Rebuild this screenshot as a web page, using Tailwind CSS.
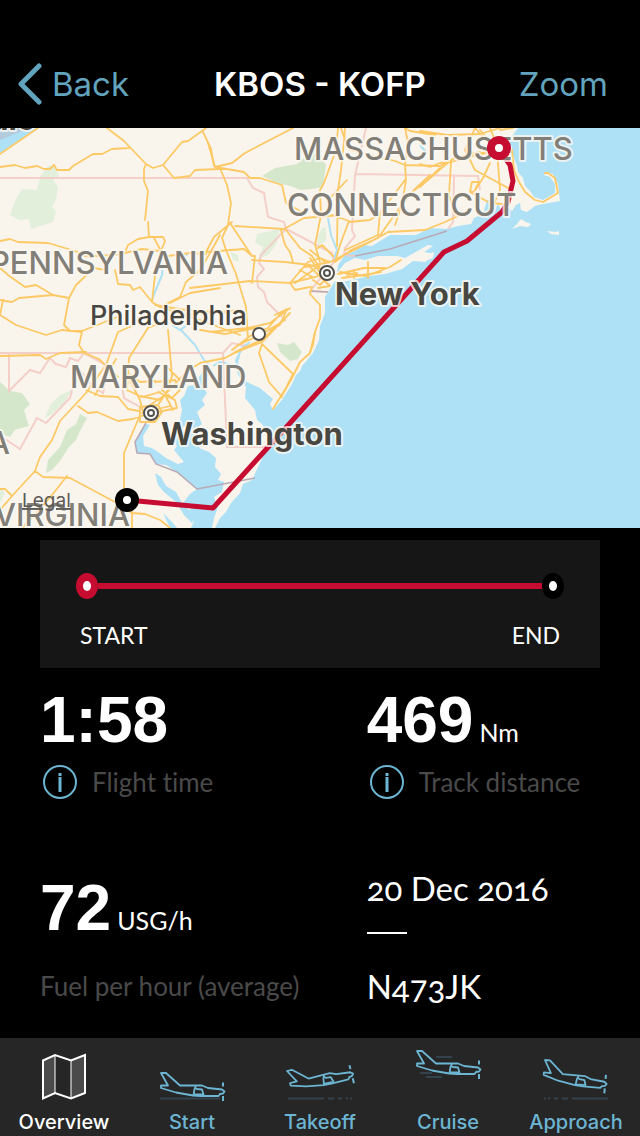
<!DOCTYPE html>
<html lang="en">
<head>
  <meta charset="UTF-8" />
  <meta name="viewport" content="width=device-width, initial-scale=1" />
  <title>KBOS - KOFP</title>
  <script src="https://cdn.jsdelivr.net/npm/@tailwindcss/browser@4"></script>
</head>
<body class="bg-black text-white font-['Lato',sans-serif]">
  <div class="min-h-screen flex flex-col">
    <header class="grid grid-cols-[1fr_auto_1fr] items-center h-32 pt-[42px] px-4 font-['Inter',sans-serif] text-[33px]">
      <button class="flex items-center gap-2 text-[#62a3bd]">
        <svg class="w-7 h-11" viewBox="0 0 28 44" fill="none" stroke="currentColor" stroke-width="5" stroke-linecap="round" stroke-linejoin="round">
          <path d="M23 3 5 21l18 18" />
        </svg>
        Back
      </button>
      <h1 class="font-semibold">KBOS - KOFP</h1>
      <button class="justify-self-end pr-4 text-[#62a3bd]">Zoom</button>
    </header>

    <main class="flex-grow">
      <svg class="block w-full h-[400px]" viewBox="0 128 640 400" preserveAspectRatio="xMidYMid slice" role="img" aria-label="Route map">
        <rect y="128" width="640" height="400" fill="#aee1f6" />

        <!-- land -->
        <g fill="#f9f5ed">
          <path d="M0 128H518L513 135 505 141 503 148 507 152 512 153 517 166 518 172 523 178 525 186 530 191 534 197 543 200 555 193 555 184 550 177 544 175 546 172 553 174 558 184 560 201 543 204 535 206 527 212 521 210 520 203 516 205 512 211 507 206 502 211 498 204 493 213 490 200 487 200 483 214 474 218 471 224 458 226 447 229 430 228 416 235 402 235 390 235 380 241 372 246 362 245 355 251 345 255 338 265 337 273 345 263 355 258 365 260 378 256 397 256 405 258 414 253 428 245 433 246 424 252 434 254 425 262 413 261 402 269 385 274 370 276 352 280 342 282 335 281 330 289 325 297 325 313 320 326 319 340 313 353 302 366 300 371 296 375 292 384 282 400 273 410 270 404 273 399 260 388 247 382 240 372 238 358 246 344 243 345 235 360 238 375 246 387 245 398 255 410 257 420 262 424 268 436 267 447 260 463 252 480 243 484 240 493 231 503 226 512 220 518 215 528H0Z" />
          <path d="M512 229 517 224 521 219 526 222 531 224 528 227 520 226ZM547 231 556 232 559 231 559 235 551 234ZM420 257 434 252 433 258 423 262Z" />
        </g>

        <!-- chesapeake bay and its rivers -->
        <g fill="#aee1f6">
          <path d="M209 363 208 376 203 387 207 393 202 400 205 405 197 412 202 424 195 430 196 438 205 440 199 448 209 452 216 458 215 467 221 474 218 480 224 482 222 492 214 497 218 507 214 518 212 528H191L194 522 186 516 191 508 183 503 190 494 197 489 187 481 177 472 166 465 156 464 150 454 137 453 135 442 140 432 146 424 150 425 143 436 144 446 152 448 158 452 166 458 178 464 184 462 174 450 177 446 170 438 177 433 180 420 182 410 180 400 184 396 188 386 196 385 199 377Z" />
          <path d="M155 473 161 477 166 486 176 492 182 503 190 511 193 524 184 515 176 502 164 492 158 485ZM163 513 172 522 177 528H170Z" />
        </g>
        <path d="M182 428 187 424 186 435ZM213 444 219 450 215 454Z" fill="#f9f5ed" />
        <path d="M0 128H38L0 153Z" fill="#aee1f6" />
        <path d="M0 128H30L0 140Z" fill="#b3cbdc" />
        <g fill="none" stroke="#aee1f6" stroke-width="2" stroke-linejoin="round">
          <path d="M181 330 195 345 204 360 209 364M163 263 162 275 155 292 152 300M238 360 240 350 250 342M328 218 331 235 337 250 333 262M238 366 220 362 213 366M420 145 426 152M188 254 183 256M172 325 180 330 190 323" />
        </g>

        <!-- parks -->
        <g fill="#e1efdb">
          <path d="M48 166 55 165 59 177 53 180 58 187 56 199 52 207 56 211 53 222 40 226 31 229 29 219 19 220 10 215 16 199 22 189 37 190 40 177Z" />
          <path d="M257 234 280 229 276 245 268 255 258 259 263 247 255 243ZM322 228 326 227 326 241 318 245 317 238ZM230 252 238 255 239 262 233 260ZM45 418 50 405 60 395 72 390 65 402 52 414ZM0 488 5 493 0 503Z" />
        </g>
        <g fill="#d5e7cb">
          <path d="M262 176 275 168 297 164 309 154 317 150 326 165 323 187 312 189 301 190 290 186 275 182Z" />
          <path d="M0 382 10 391 22 393 30 404 24 410 29 426 15 430 10 437 0 434ZM80 414 87 418 80 431 76 440 69 447 60 461 52 470 46 473 48 460 60 447 67 430 76 424ZM277 343 288 345 294 342 302 352 298 359 290 361 280 352Z" />
        </g>

        <!-- state borders -->
        <g fill="none" stroke="#f4c9c2" stroke-width="2" opacity=".85">
          <path d="M0 178H247L253 188 264 193 268 217 284 222 286 229 261 255 259 263 264 269 257 277 258 287 264 292 267 302 282 317M286 229 332 253 334 262 310 291 328 292M366 128 355 175 352 230 355 236 345 248 344 255 355 256M356 174 478 176 480 190M454 176 453 222 448 229" />
          <path d="M0 353H223L232 343 245 346M223 353 227 447H267M9 353V391L30 370 40 373 50 358 56 364 66 367 70 358 78 361 84 353M84 353 108 366 103 393 92 386 80 370M122 385 124 398 142 408M72 390 70 398 46 423 37 418 20 449 8 441 0 436" />
        </g>
        <g fill="none" stroke="#b9a9b5" stroke-width="1.5">
          <path d="M355 256 390 249 447 231M146 423 135 442 137 453 150 454 156 464 177 472 197 489 255 478M310 291 328 292" />
        </g>

        <!-- roads -->
        <g fill="none" stroke="#fdc965" stroke-width="1.8" stroke-linejoin="round" stroke-linecap="round">
          <g id="roads-northwest">
            <path d="M0 154 38 128M0 167 15 165 25 168 37 166 44 169 50 169 54 165 57 170 69 170 73 166 93 154 102 154 112 149 129 148M107 128 124 141 146 164 153 168 163 165 182 142 188 141 202 131 206 128M203 132 211 149 214 166 220 169M163 165 174 178 190 176 195 170 220 169M146 164 144 169V181L148 191 145 220M148 222 149 237M149 237 138 239 128 245 126 250M149 237 163 237 165 241 161 251 154 238M0 241 10 239 18 242 48 243 75 251 85 256 100 256 120 254 142 249 160 251 168 256 190 253 206 254" />
            <path d="M0 268 8 275 25 287 36 285 53 295 69 298 76 285 94 268 105 270 110 260M0 300 12 302 19 298 53 295M3 300 0 315 16 325 46 335 62 330M69 298 64 325 70 331 82 331 120 316M115 270 118 284 130 285 133 290 140 287 152 302 160 307 180 297 186 282 200 270 210 253 220 235M152 302 155 275 161 251M170 303 190 293 220 288" />
          </g>
          <g id="roads-north-jersey">
            <path d="M293 128 245 153 232 163 215 167 208 143M215 167 244 172 250 178 260 178 282 185 286 203 300 211M220 168 227 185 231 203 228 225 222 238 226 250 236 274 246 307M230 223 246 247 252 256 255 256 252 283M235 226 284 229 304 218 340 215M286 230 300 248 312 256 320 268M206 252 244 249 252 256M252 260 285 262 310 265 325 270M190 288 250 281 290 283 315 277 330 272M281 230 285 245 290 252 293 262M206 252 214 237 232 222" />
            <path d="M338 128 336 150 324 183 320 190 321 215 315 245 320 262M345 128 344 142 341 170 338 190 337 246M341 128 345 140 350 148M347 180 330 198M332 215 349 221 340 245 335 262M349 222 370 220 380 213 405 180M380 213 378 235 345 250M335 262 351 250 378 238 401 206 414 190 430 175M338 258 370 242 388 232 425 230 445 222 460 215M350 150 395 161 405 165 408 142 405 128M405 165 406 180 402 205 395 225M405 165 440 166 455 158 480 152M408 195 428 180 445 165 454 158" />
            <path d="M340 272 366 276 390 267 401 260M338 274 364 268 385 268M342 278 370 274 381 272M368 262V278M354 270V278M347 275 357 273M325 262 310 250M305 267 330 262M290 283 308 262M295 283 320 265M290 283 295 290 310 287M308 265 330 286 318 288M312 287 310 294 320 305 320 318 315 332 310 353 300 362 292 378 281 397M308 262 320 258 330 262 340 258M318 248 322 245 333 256M310 258 325 280 320 285 313 280M300 270 312 277" />
          </g>
          <g id="roads-new-england">
            <path d="M420 131 447 135 480 134 500 128M405 128 410 131 435 135M500 130 513 128M480 130 490 142 500 146M475 128 470 140 465 150 475 170 497 182 512 190M420 164 430 167 440 163 451 162 470 157 490 150M451 162 449 195 455 215M497 150 500 190 493 206M490 163 483 178 474 192 470 191 472 182 479 182 474 192M420 187 440 168M512 150 514 170 518 180 525 192 535 200 543 202 558 193 555 178 548 173 545 173M465 150 480 155 495 150M475 128 484 138M490 128 494 138M470 192 490 203 502 204" />
          </g>
          <g id="roads-southwest">
            <path d="M62 330 82 332 79 345 84 353 99 359 110 370 118 377M0 356 40 355 46 359 60 353 86 352M148 328 129 358 127 390M86 393 106 365 118 332 134 325M95 395 116 359M86 393 60 421 52 440 40 457 35 471 43 477 70 478 115 502M35 471 12 496 0 510M0 489 5 489 12 496M67 476 52 495 30 520 22 528M78 406 88 413 97 412 118 421 133 419 150 413M86 390 100 396 118 397 128 409 139 411M127 390 142 397 160 392M127 375 140 400 143 412M140 415 124 453V490L132 512V528M132 513 145 514 160 520 170 528M115 502 132 513" />
            <path d="M148 328 180 315 240 310M168 330 172 376 168 390 158 405M128 373 140 382 155 381M155 382 175 380 180 390 172 398 162 390 165 380 175 388M160 400 174 385 185 373 200 363 225 358 240 350M158 392 175 400 177 408 158 412M150 405 165 395 173 410M140 407 158 405 162 412 155 422 140 422ZM142 413 170 406M140 396 160 400M165 365 180 380" />
          </g>
          <g id="roads-philadelphia">
            <path d="M160 307 200 320 240 335M155 305 185 310 230 313M210 332 248 328 270 323 290 308M235 352 250 345 262 340 285 318M232 354 262 342 290 313M238 345 262 334 285 320M232 350 250 336 268 328 282 312M275 315 287 309 280 325 270 330M246 307 248 340M262 344 293 374M262 344 259 353 269 382 282 397M293 374 286 388 273 409M315 332 313 345 310 352M200 330 225 334 255 328" />
          </g>
        </g>

        <!-- flight track -->
        <path d="M127 500 213 508 300 412 444 252 467 241 502 212 508 202 513 181 510 165 499 149" fill="none" stroke="#c60c30" stroke-width="5" stroke-linejoin="round" />

        <!-- place names -->
        <g class="font-['Inter',sans-serif]" paint-order="stroke" stroke="#fbf8f2" stroke-opacity=".8" stroke-width="4" stroke-linejoin="round">
          <g fill="#827e78" font-size="31" font-weight="500">
            <text x="294" y="160">MASSACHUSETTS</text>
            <text x="287" y="216">CONNECTICUT</text>
            <text x="228" y="274" text-anchor="end">PENNSYLVANIA</text>
            <text x="70" y="388">MARYLAND</text>
            <text x="10" y="454" text-anchor="end">WEST VIRGINIA</text>
            <text x="130" y="526" text-anchor="end">VIRGINIA</text>
          </g>
          <g fill="#484640" font-size="31" font-weight="700">
            <text x="90" y="325" font-size="27" font-weight="500">Philadelphia</text>
            <text x="335" y="305">New York</text>
            <text x="161" y="445">Washington</text>
            <text x="36" y="130" text-anchor="end">Buffalo</text>
          </g>
        </g>
        <g fill="#fff" stroke="#54524e" stroke-width="2">
          <circle cx="327" cy="273" r="7" />
          <circle cx="327" cy="273" r="3" />
          <circle cx="151" cy="413" r="7" />
          <circle cx="151" cy="413" r="3" />
          <circle cx="259" cy="334" r="6" />
        </g>
        <a href="#"><text x="22" y="507" font-size="19" fill="#5c5a57" text-decoration="underline" class="font-['Inter',sans-serif]">Legal</text></a>

        <circle cx="499" cy="148" r="8" fill="#fff" stroke="#c60c30" stroke-width="8" />
        <circle cx="127" cy="500" r="8" fill="#fff" stroke="#000" stroke-width="8" />
      </svg>

      <section class="mx-10 mt-3 h-32 bg-[#161616] px-9 pt-[33px]">
        <div class="flex items-center">
          <span class="flex items-center justify-center w-[22px] h-[26px] rounded-[50%] bg-[#c60c30]"><span class="w-2 h-[10px] rounded-[50%] bg-white"></span></span>
          <span class="flex-grow h-[6px] bg-[#c60c30]"></span>
          <span class="flex items-center justify-center w-[22px] h-[26px] rounded-[50%] bg-black"><span class="w-2 h-[10px] rounded-[50%] bg-white"></span></span>
        </div>
        <div class="flex justify-between px-1 mt-5 text-[23px] leading-8">
          <span>START</span>
          <span>END</span>
        </div>
      </section>

      <section class="grid grid-cols-[7fr_5fr] px-10 pt-5">
        <div class="h-[180px]">
          <p class="text-[64px] leading-16 font-bold font-['Liberation_Sans',sans-serif]">1:58</p>
          <div class="flex items-center gap-[14px] mt-3 pl-[2px] text-[26px] leading-8 text-[#4a4a4a] [font-variant-ligatures:none]">
            <button class="text-[#6cb5d3]" aria-label="About flight time">
              <svg class="block w-9 h-9" viewBox="0 0 36 36" fill="none" stroke="currentColor" stroke-width="2">
                <circle cx="18" cy="18" r="16" />
                <path d="M18 13v15M18 9v3" stroke-width="3" />
              </svg>
            </button>
            Flight time
          </div>
        </div>
        <div class="h-[180px]">
          <p class="text-[64px] leading-16 font-bold font-['Liberation_Sans',sans-serif]">469<span class="ml-[6px] text-[25px] leading-none font-normal font-['Lato',sans-serif]">Nm</span></p>
          <div class="flex items-center gap-[14px] mt-3 pl-[2px] text-[26px] leading-8 text-[#4a4a4a] [font-variant-ligatures:none]">
            <button class="text-[#6cb5d3]" aria-label="About track distance">
              <svg class="block w-9 h-9" viewBox="0 0 36 36" fill="none" stroke="currentColor" stroke-width="2">
                <circle cx="18" cy="18" r="16" />
                <path d="M18 13v15M18 9v3" stroke-width="3" />
              </svg>
            </button>
            Track distance
          </div>
        </div>
        <div class="pt-2">
          <p class="text-[64px] leading-16 font-bold font-['Liberation_Sans',sans-serif]">72<span class="ml-[6px] text-[25px] leading-none font-normal font-['Lato',sans-serif]">USG/h</span></p>
          <p class="mt-[30px] text-[26px] leading-8 text-[#4a4a4a]">Fuel per hour (average)</p>
        </div>
        <div class="text-[33px] leading-10 oldstyle-nums">
          <p>20 Dec 2016</p>
          <hr class="w-10 my-6 border-0 h-[2px] bg-white" />
          <p class="mt-8">N473JK</p>
        </div>
      </section>
    </main>

    <nav class="grid grid-cols-5 h-[98px] bg-[#262626] text-[#6cb5d3] text-center text-[20px] leading-12 font-medium font-['Inter',sans-serif]">
      <!-- shared airplane outline, tail tip at 0,0 -->
      <svg class="hidden">
        <symbol id="plane" viewBox="-10 -30 100 70" overflow="visible">
          <g fill="none" stroke="currentColor" stroke-width="1.8" stroke-linejoin="round">
            <path d="M0 0H5L19 12.500H41L47 15 61 16.500 63.500 18.500 62 20.500 59 21 57.500 23H40L32 22.500 15 19.500 0 15V12.500H7L0 0Z" />
            <path d="M35 13 33.500 16 32.500 22.500M34.500 14.500 36 16 41 16.500 42.500 21.500H33" />
            <path d="M62 9.500V13.500M62 23V28" stroke-width="2" />
          </g>
        </symbol>
      </svg>
      <a href="#" class="flex flex-col items-center text-white">
        <svg class="w-32 h-15 overflow-visible" viewBox="0 0 128 60" fill="none" stroke="currentColor" stroke-width="2">
          <path d="M43 23 55 17V55L43 61ZM71 23 85 17V55L71 61Z" fill="#4a4a4a" stroke="none" />
          <path d="M55 17V55M71 23V60" stroke-width="1" />
          <path d="M43 22.500 55 17 71 22.500 85 17V55L71 60.500 55 55 43 60.500Z" />
        </svg>
        <span>Overview</span>
      </a>
      <a href="#" class="flex flex-col items-center">
        <svg class="w-32 h-15 overflow-visible" viewBox="0 0 128 60">
          <path d="M32 60.500H92" stroke="#33424c" stroke-width="2" />
          <use href="#plane" x="23" y="5" width="100" height="70" />
        </svg>
        <span>Start</span>
      </a>
      <a href="#" class="flex flex-col items-center">
        <svg class="w-32 h-15 overflow-visible" viewBox="0 0 128 60">
          <path d="M32 60.500H68M72 60.500h6M82 60.500h4M90 60.500h2M94 60.500h2" stroke="#33424c" stroke-width="2" />
          <g transform="translate(31 33) rotate(-14)"><use href="#plane" x="-10" y="-30" width="100" height="70" /></g>
        </svg>
        <span>Takeoff</span>
      </a>
      <a href="#" class="flex flex-col items-center">
        <svg class="w-32 h-15 overflow-visible" viewBox="0 0 128 60">
          <path d="M52 19h16M36 35h12M42 39h16" stroke="#33424c" stroke-width="2" />
          <use href="#plane" x="23" y="-17" width="100" height="70" />
        </svg>
        <span>Cruise</span>
      </a>
      <a href="#" class="flex flex-col items-center">
        <svg class="w-32 h-15 overflow-visible" viewBox="0 0 128 60">
          <path d="M32 60.500h2M36 60.500h2M42 60.500h4M50 60.500h6M60 60.500H96" stroke="#33424c" stroke-width="2" />
          <g transform="translate(33 22) rotate(5)"><use href="#plane" x="-10" y="-30" width="100" height="70" /></g>
        </svg>
        <span>Approach</span>
      </a>
    </nav>
  </div>
</body>
</html>
